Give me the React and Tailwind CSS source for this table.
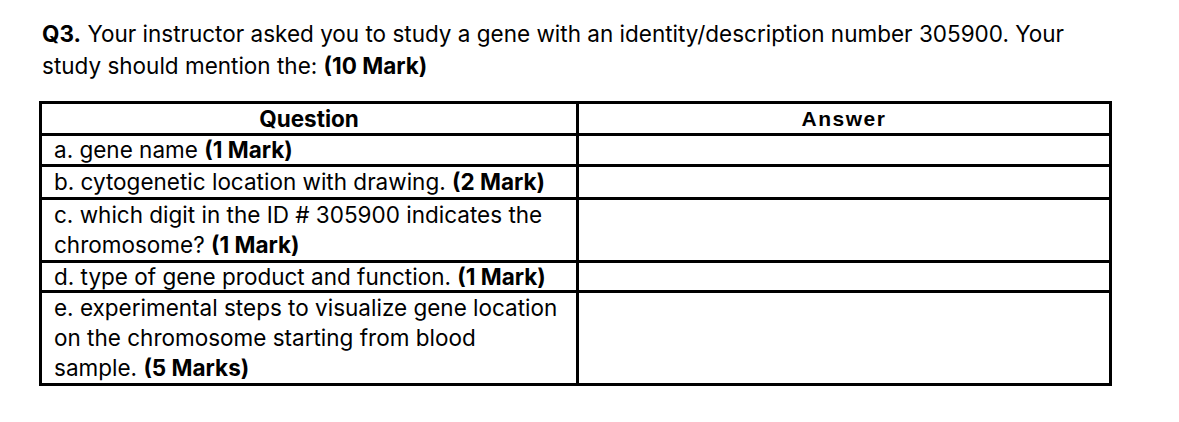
import React from 'react';

const rows = [
  { q: <>a. gene name <b>(1 Mark)</b></>, lh: 'leading-[28px]' },
  { q: <>b. cytogenetic location with drawing. <b>(2 Mark)</b></>, lh: 'leading-[30px]' },
  { q: <>c. which digit in the ID # 305900 indicates the<br />chromosome? <b>(1 Mark)</b></>, lh: 'leading-[30px]' },
  { q: <>d. type of gene product and function. <b>(1 Mark)</b></>, lh: 'leading-[27px]' },
  { q: <>e. experimental steps to visualize gene location<br />on the chromosome starting from blood<br />sample. <b>(5 Marks)</b></>, lh: 'leading-[30px]' },
];

export default function App() {
  return (
    <div className="min-h-[422px] bg-white text-black font-['Inter',sans-serif] text-[22.5px] pt-[18px] pl-[42px]">
      <p className="leading-[32px] w-[1100px]">
        <b>Q3.</b> Your instructor asked you to study a gene with an identity/description number 305900. Your<br />
        study should mention the: <b>(10 Mark)</b>
      </p>
      <table className="mt-[19px] -ml-[3px] w-[1073px] border-collapse border-[3px] border-black table-fixed">
        <colgroup>
          <col className="w-[537px]" />
          <col />
        </colgroup>
        <thead>
          <tr>
            <th className="border-[3px] border-black leading-[29px] font-bold text-center">Question</th>
            <th className="border-[3px] border-black leading-[29px] font-bold text-center font-['Liberation_Sans',sans-serif] text-[21px] tracking-[1.5px]">Answer</th>
          </tr>
        </thead>
        <tbody>
          {rows.map((r, i) => (
            <tr key={i}>
              <td className={`border-[3px] border-black pl-[12px] align-top ${r.lh}`}>{r.q}</td>
              <td className="border-[3px] border-black"></td>
            </tr>
          ))}
        </tbody>
      </table>
    </div>
  );
}
